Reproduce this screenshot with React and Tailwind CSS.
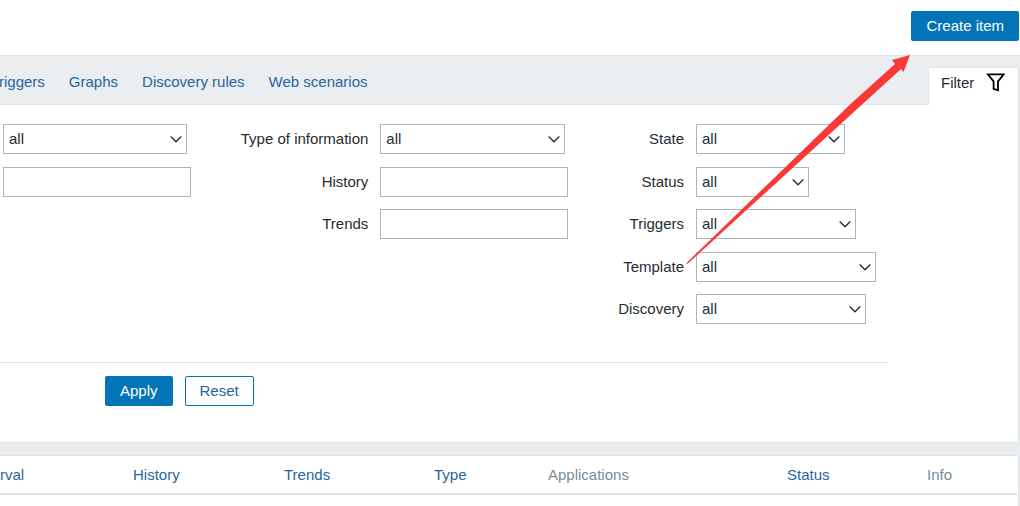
import React, { useState } from "react";

const leftFields = [{ id: "type", label: "Type", kind: "select", width: "w-[184px]" }, { id: "interval", label: "Update interval", kind: "text" }];

const middleFields = [
  { id: "value-type", label: "Type of information", kind: "select", width: "w-[185px]" },
  { id: "history", label: "History", kind: "text" },
  { id: "trends", label: "Trends", kind: "text" },
];

const rightFields = [
  { id: "state", label: "State", kind: "select", width: "w-[149px]" },
  { id: "status", label: "Status", kind: "select", width: "w-[113px]" },
  { id: "with-triggers", label: "Triggers", kind: "select", width: "w-[160px]" },
  { id: "templated", label: "Template", kind: "select", width: "w-[180px]" },
  { id: "discovered", label: "Discovery", kind: "select", width: "w-[170px]" },
];

const columns = [
  { name: "rval", width: "w-[133px]", sortable: true },
  { name: "History", width: "w-[151px]", sortable: true },
  { name: "Trends", width: "w-[150px]", sortable: true },
  { name: "Type", width: "w-[114px]", sortable: true },
  { name: "Applications", width: "w-auto", sortable: false },
  { name: "Status", width: "w-[140px]", sortable: true },
  { name: "Info", width: "w-[90px]", sortable: false },
];

const SelectBox = ({ id, label, width }) => (
  <div className={`relative h-[30px] ${width}`}>
    <select
      id={id}
      aria-label={label}
      className="h-full w-full appearance-none border border-[#acb6b9] bg-white pl-[5px] pr-6 text-[#1f2c33]"
    >
      <option>all</option>
    </select>
    <svg className="pointer-events-none absolute right-[5px] top-[11px] h-2 w-3" viewBox="0 0 12 8" fill="none">
      <path d="M0.7 1.5 L6 6.8 L11.3 1.5" stroke="#1f2c33" strokeWidth="1.3" />
    </svg>
  </div>
);

const TextBox = ({ id, label }) => (
  <input
    id={id}
    type="text"
    aria-label={label}
    className="h-[30px] w-[188px] border border-[#acb6b9] bg-white px-[5px] text-[#1f2c33]"
  />
);

const Fields = ({ fields, showLabels = true, className }) => (
  <div className={`grid content-between gap-x-3 ${className}`}>
    {fields.map((field) => (
      <React.Fragment key={field.id}>
        {showLabels && (
          <label htmlFor={field.id} className="h-[30px] text-right leading-[30px]">
            {field.label}
          </label>
        )}
        {field.kind === "select" ? <SelectBox {...field} /> : <TextBox {...field} />}
      </React.Fragment>
    ))}
  </div>
);

const FilterIcon = () => (
  <svg className="h-[19px] w-[19px]" viewBox="0 0 19 19" fill="none" stroke="#000" strokeWidth="1.8">
    <path d="M1.8 1.3 H17.8 L12 8.4 V17.3 L7.6 15.8 V8.4 Z" />
  </svg>
);

const Arrow = () => (
  <svg className="pointer-events-none absolute right-[110px] top-[55px] h-[209px] w-[224px]" viewBox="0 0 224 209">
    <path d="M224 0 L206 5 L209 9 L164 49.5 L0.5 208 L1.5 209 L164 60.5 L215 14 L217.5 17 Z" fill="#fb3838" />
  </svg>
);

const App = () => {
  const [filterOpen, setFilterOpen] = useState(true);

  return (
    <div className="relative min-h-screen overflow-x-hidden bg-[#ebeef0] font-['Liberation_Sans',Arial,sans-serif] text-[15px] leading-5 text-[#1f2c33]">
      <header className="flex h-14 justify-end border-b border-[#dfe4e7] bg-white pr-px pt-[11px]">
        <button className="h-[30px] rounded-[2px] bg-[#0275b8] px-[15px] text-white">Create item</button>
      </header>

      <main className="pr-px">
        <div className="flex items-end justify-between">
          <nav className="-ml-px flex h-12 items-center gap-6 pt-1 text-[#1f65a0]">
            <a href="#triggers">riggers</a>
            <a href="#graphs">Graphs</a>
            <a href="#discovery">Discovery rules</a>
            <a href="#web">Web scenarios</a>
          </nav>
          <button
            onClick={() => setFilterOpen(!filterOpen)}
            className="relative z-10 -mb-px flex h-[38px] w-[91px] items-center gap-3 rounded-t-[2px] border border-b-0 border-[#dfe4e7] bg-white pb-2 pl-3"
          >
            Filter
            <FilterIcon />
          </button>
        </div>

        {filterOpen && (
          <form
            onSubmit={(e) => e.preventDefault()}
            className="rounded-b-[2px] border border-l-0 border-[#dfe4e7] bg-white pb-9 pt-[19px]"
          >
            <div className="mr-[130px] flex items-start justify-between border-b border-[#e4e8ea] pb-[38px] pl-[3px] pr-3">
              <Fields fields={leftFields} showLabels={false} className="h-[73px]" />
              <Fields fields={middleFields} className="h-[115px] grid-cols-[auto_auto]" />
              <Fields fields={rightFields} className="h-[200px] grid-cols-[auto_auto]" />
            </div>
            <div className="flex gap-3 pl-[105px] pt-[13px]">
              <button type="submit" className="h-[30px] rounded-[2px] bg-[#0275b8] px-[15px] text-white">
                Apply
              </button>
              <button
                type="reset"
                className="h-[30px] rounded-[2px] border border-[#0275b8] bg-white px-3.5 text-[#1f65a0]"
              >
                Reset
              </button>
            </div>
          </form>
        )}

        <section className="mt-3 border border-b-0 border-l-0 border-[#dfe4e7] bg-white pb-3 pr-px">
          <table className="w-full table-fixed">
            <thead>
              <tr className="h-[38px] border-b-2 border-[#dce2e5]">
                {columns.map((column) => (
                  <th
                    key={column.name}
                    className={`text-left font-normal ${column.width} ${column.sortable ? "text-[#1f65a0]" : "text-[#768d99]"}`}
                  >
                    {column.sortable ? <a href={`#${column.name}`}>{column.name}</a> : column.name}
                  </th>
                ))}
              </tr>
            </thead>
          </table>
        </section>
      </main>

      <Arrow />
    </div>
  );
};

export default App;
